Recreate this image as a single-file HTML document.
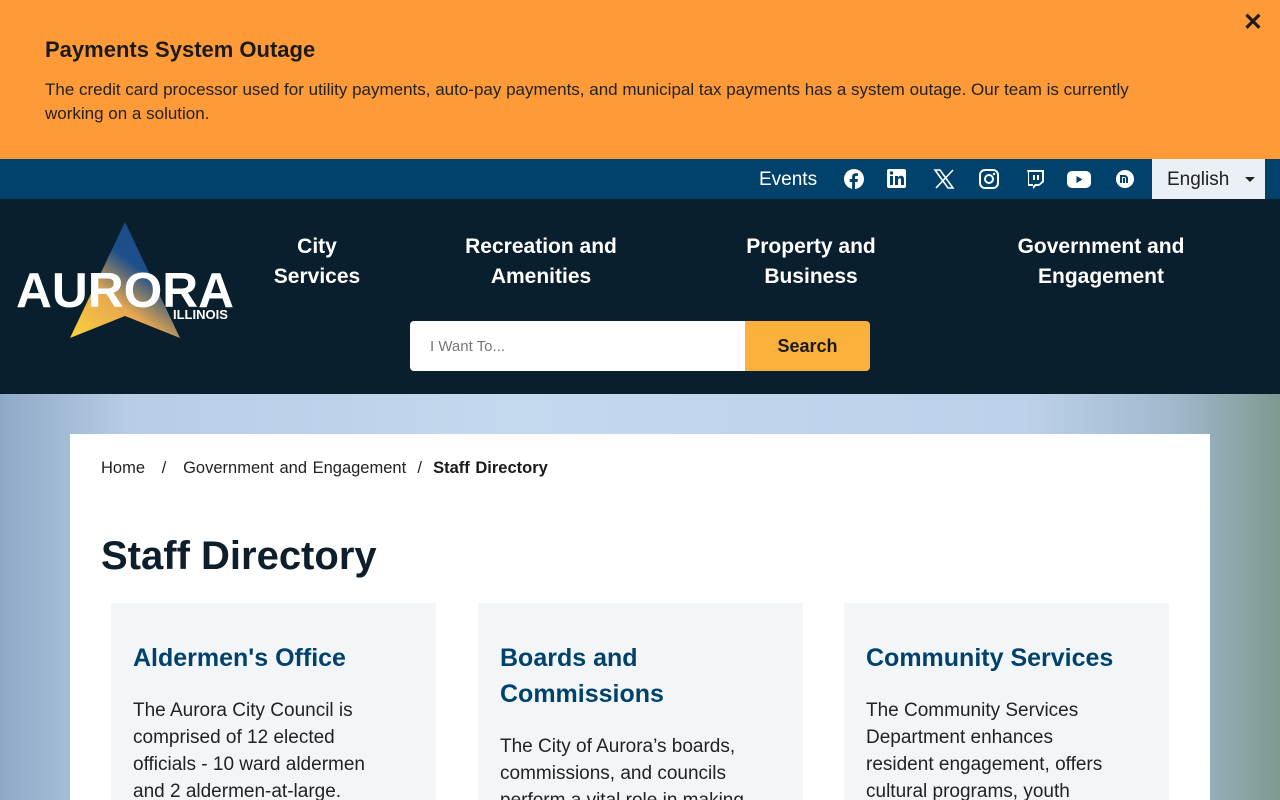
<!DOCTYPE html>
<html><head><style>
*{box-sizing:border-box;margin:0;padding:0}
html,body{width:1280px;height:800px;overflow:hidden}
body{font-family:"Liberation Sans",sans-serif;color:#1c1c1c;background:#fff;position:relative}
.alert{height:159px;background:#FE9A37;padding:37px 45px 0;position:relative}
.alert h2{font-size:22px;font-weight:bold;color:#1a1a1a;margin-bottom:15px}
.alert p{font-size:17px;line-height:24px;color:#222}
.close{position:absolute;right:17px;top:8px;font-size:24px;font-weight:bold}
.top{height:40px;background:#00426B;position:relative;color:#fff}
.top .ev{position:absolute;left:759px;top:10px;font-size:19px}
.ic{position:absolute;top:9px;width:22px;height:22px}
.lang{position:absolute;left:1152px;top:0;width:113px;height:40px;background:#EAF0F6;color:#222;font-size:19px;padding:10px 0 0 15px}
.lang:after{content:"";position:absolute;right:10px;top:18px;border:5px solid transparent;border-top-color:#222}
.hdr{height:195px;background:#0A1F2D;position:relative;color:#fff}
.nav{position:absolute;top:33px;font-size:21px;font-weight:bold;text-align:center;line-height:30px}
.search{position:absolute;left:410px;top:122px;width:335px;height:50px;background:#fff;border-radius:4px 0 0 4px;color:#777;font-size:15px;padding:17px 20px}
.btn{position:absolute;left:745px;top:122px;width:125px;height:50px;background:#FBB03B;border-radius:0 4px 4px 0;color:#1a1a1a;font-weight:bold;font-size:18px;text-align:center;line-height:50px}
.bg{position:absolute;top:394px;left:0;width:1280px;height:406px;background:linear-gradient(90deg,#8ea9c7 0%,#b7cde6 10%,#c4d8ee 40%,#bcd2ea 80%,#9fb8cc 92%,#7c9a8f 100%)}
.main{position:absolute;left:70px;top:434px;width:1140px;height:366px;background:#fff;overflow:hidden}
.bc{position:absolute;left:31px;top:25px;font-size:16.5px;color:#222;word-spacing:1px}
.bc b{color:#1a1a1a}
.main h1{position:absolute;left:31px;top:100px;font-size:40px;font-weight:bold;color:#0f1e2b}
.card{position:absolute;top:169px;width:325px;height:200px;background:#F3F6F9;padding:37px 22px}
.card h3{font-size:25px;color:#00426B;line-height:36px;font-weight:bold;margin-bottom:21px}
.card p{font-size:19px;line-height:27px;color:#222;white-space:nowrap}
</style></head><body>
<div class="alert"><div class="close">✕</div><h2>Payments System Outage</h2><p>The credit card processor used for utility payments, auto-pay payments, and municipal tax payments has a system outage. Our team is currently<br>working on a solution.</p></div>
<div class="top"><div class="ev">Events</div>
<svg class="ic" style="left:843px" viewBox="0 0 22 22"><circle cx="11" cy="11" r="10" fill="#fff"/><path d="M12 21v-7h2.5l.4-3H12V9.3c0-.8.3-1.4 1.4-1.4H15V5.3c-.3 0-1.2-.1-2.2-.1-2.2 0-3.7 1.3-3.7 3.8V11H6.7v3h2.4v7z" fill="#00426B"/></svg>
<svg class="ic" style="left:886px" viewBox="0 0 22 22"><rect x="1" y="1" width="19" height="19" rx="2" fill="#fff"/><rect x="4" y="8" width="3" height="9" fill="#00426B"/><circle cx="5.5" cy="5" r="1.7" fill="#00426B"/><path d="M9 8h3v1.5c.6-1 1.7-1.7 3-1.7 2.3 0 3 1.4 3 3.7V17h-3v-5c0-1-.3-1.7-1.3-1.7S12 11 12 12v5H9z" fill="#00426B"/></svg>
<svg class="ic" style="left:933px" viewBox="0 0 22 22"><path d="M2 2h5l13 18h-5zM20 2L3 20" stroke="#fff" stroke-width="1.6" fill="none"/></svg>
<svg class="ic" style="left:978px" viewBox="0 0 22 22"><rect x="2" y="2" width="18" height="18" rx="5" stroke="#fff" stroke-width="2" fill="none"/><circle cx="11" cy="11" r="4" stroke="#fff" stroke-width="2" fill="none"/><circle cx="16" cy="6" r="1.2" fill="#fff"/></svg>
<svg class="ic" style="left:1024px" viewBox="0 0 22 22"><path d="M3 2h17v12l-5 4h-3l-3 3v-3H4V5z" fill="#fff"/><path d="M5 4h13v9l-3 3h-4l-2 2v-2H5z" fill="#00426B"/><rect x="9" y="7" width="2" height="5" fill="#fff"/><rect x="13" y="7" width="2" height="5" fill="#fff"/></svg>
<svg class="ic" style="left:1066px;width:26px" viewBox="0 0 26 22"><rect x="1" y="3" width="24" height="17" rx="5" fill="#fff"/><path d="M10.5 8v7l6-3.5z" fill="#00426B"/></svg>
<svg class="ic" style="left:1114px" viewBox="0 0 22 22"><circle cx="11" cy="11" r="9" fill="#fff"/><path d="M7 15V8h3c2 0 3 1 3 3v4M10 10v5" stroke="#00426B" stroke-width="2" fill="none"/></svg>
<div class="lang">English</div></div>
<div class="hdr">
<svg style="position:absolute;left:15px;top:20px" width="222" height="122" viewBox="0 0 222 122"><defs><linearGradient id="g" x1="0" y1="1" x2="0.7" y2="0"><stop offset="0" stop-color="#f9d23c"/><stop offset="0.4" stop-color="#e8a850"/><stop offset="0.7" stop-color="#1d4f8a"/><stop offset="1" stop-color="#1a4a85"/></linearGradient></defs><path d="M110 3L55 119l55-22 55 22z" fill="url(#g)"/><text x="1" y="88" font-family="Liberation Sans" font-weight="bold" font-size="49" fill="#fff" textLength="218" lengthAdjust="spacingAndGlyphs">AURORA</text><text x="158" y="100" font-family="Liberation Sans" font-weight="bold" font-size="13" fill="#fff">ILLINOIS</text></svg>
<div class="nav" style="left:262px;width:110px">City<br>Services</div>
<div class="nav" style="left:440px;width:202px">Recreation and<br>Amenities</div>
<div class="nav" style="left:723px;width:176px">Property and<br>Business</div>
<div class="nav" style="left:991px;width:220px">Government and<br>Engagement</div>
<div class="search">I Want To...</div><div class="btn">Search</div>
</div>
<div class="bg"></div>
<div class="main">
<div class="bc">Home &nbsp;&nbsp;/&nbsp;&nbsp; Government and Engagement &nbsp;/&nbsp; <b>Staff Directory</b></div>
<h1>Staff Directory</h1>
<div class="card" style="left:41px"><h3>Aldermen's Office</h3><p>The Aurora City Council is<br>comprised of 12 elected<br>officials - 10 ward aldermen<br>and 2 aldermen-at-large.</p></div>
<div class="card" style="left:408px"><h3>Boards and<br>Commissions</h3><p>The City of Aurora’s boards,<br>commissions, and councils<br>perform a vital role in making</p></div>
<div class="card" style="left:774px"><h3>Community Services</h3><p>The Community Services<br>Department enhances<br>resident engagement, offers<br>cultural programs, youth</p></div>
</div>
</body></html>
